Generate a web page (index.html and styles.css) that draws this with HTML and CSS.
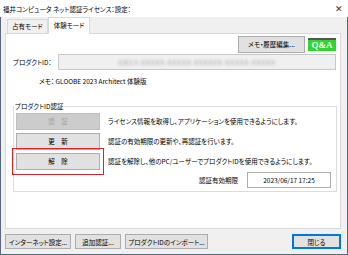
FILE: index.html
```html
<!DOCTYPE html>
<html lang="ja">
<head>
  <meta charset="UTF-8" />
  <title>ネット認証ライセンス 設定</title>
  <link rel="stylesheet" href="styles.css">
</head>
<body>
  <div class="window">
    <div class="titlebar">
      <span class="title">福井コンピュータ ネット認証ライセンス：設定：</span>
      <span class="close">✕</span>
    </div>

    <div class="body">
      <div class="tabs">
        <div class="tab">占有モード</div>
        <div class="tab active">体験モード</div>
      </div>

      <div class="panel">
        <div class="top-row">
          <button class="btn memo-btn">メモ・履歴編集...</button>
          <button class="qa">Q&amp;A</button>
        </div>

        <div class="id-row">
          <span class="id-label">プロダクトID：</span>
          <div class="id-field"><span class="blurred">GB23-XXXXX-XXXXX-XXXXXX-XXXXX-XXXXX</span></div>
        </div>

        <div class="memo">メモ：&nbsp;GLOOBE 2023 Architect 体験版</div>

        <fieldset class="group">
          <legend>プロダクトID認証</legend>
          <div class="action-row">
            <button class="btn action disabled">認　証</button>
            <span class="desc">ライセンス情報を取得し、アプリケーションを使用できるようにします。</span>
          </div>
          <div class="action-row">
            <button class="btn action">更　新</button>
            <span class="desc">認証の有効期限の更新や、再認証を行います。</span>
          </div>
          <div class="action-row">
            <div class="highlight">
              <button class="btn action">解　除</button>
            </div>
            <span class="desc">認証を解除し、他のPC/ユーザーでプロダクトIDを使用できるようにします。</span>
          </div>
          <div class="expire-row">
            <span class="expire-label">認証有効期限</span>
            <div class="date-field">2023/06/17 17:25</div>
          </div>
        </fieldset>
      </div>

      <div class="footer">
        <button class="btn foot net-btn">インターネット設定...</button>
        <button class="btn foot add-btn">追加認証...</button>
        <button class="btn foot import-btn">プロダクトIDのインポート...</button>
        <button class="btn foot close-btn">閉じる</button>
      </div>
    </div>
  </div>
</body>
</html>
```

FILE: styles.css
```css
body {
  margin: 0;
  font-family: "Noto Sans CJK JP", "Noto Sans", sans-serif;
  font-size: 6.5px;
  font-feature-settings: "palt";
  color: #000;
  overflow: hidden;
}

.window {
  width: 348px;
  height: 255px;
  display: flex;
  flex-direction: column;
  background: #f0f0f0;
  box-sizing: border-box;
  overflow: hidden;
}

.titlebar {
  height: 17px;
  flex: none;
  background: #fff;
  display: flex;
  align-items: center;
  justify-content: space-between;
  padding: 0 5px 0 3px;
  font-size: 6.5px;
}
.close {
  font-size: 9px;
  color: #333;
}

.body {
  flex: 1;
  border: 1px solid #56687a;
  border-top: none;
  display: flex;
  flex-direction: column;
  padding: 0 6px 0 4px;
}

.tabs {
  display: flex;
  align-items: flex-end;
  padding-left: 2px;
  height: 16px;
  flex: none;
}
.tab {
  height: 13px;
  line-height: 13px;
  padding: 0 4px;
  border: 1px solid #d9d9d9;
  border-bottom: none;
  background: #f0f0f0;
}
.tab.active {
  height: 16px;
  line-height: 15px;
  padding: 0 5px;
  background: #fff;
  margin-bottom: -1px;
  position: relative;
  z-index: 1;
}

.panel {
  height: 196px;
  flex: none;
  background: #fff;
  border: 1px solid #d9d9d9;
  box-sizing: border-box;
  display: flex;
  flex-direction: column;
  padding: 1px 4px 0 7px;
}

.btn {
  font: inherit;
  font-feature-settings: "palt";
  background: #e1e1e1;
  border: 1px solid #adadad;
  padding: 0;
  color: #000;
  white-space: nowrap;
}

.top-row {
  display: flex;
  justify-content: flex-end;
  align-items: center;
  gap: 3px;
  height: 18px;
}
.memo-btn {
  width: 67px;
  height: 17px;
}
.qa {
  width: 28px;
  height: 13px;
  padding: 0;
  background: #2fd62f;
  border: none;
  border-top: 2px solid #555;
  color: #fff;
  font-family: "Liberation Serif", serif;
  font-size: 9px;
  font-weight: bold;
  line-height: 10px;
}

.id-row {
  display: flex;
  align-items: center;
  margin-top: 1px;
}
.id-label {
  width: 45px;
  white-space: nowrap;
}
.id-field {
  flex: 1;
  height: 16px;
  background: #f0f0f0;
  border: 1px solid #c8c8c8;
  box-sizing: border-box;
  display: flex;
  align-items: center;
  justify-content: center;
  overflow: hidden;
}
.blurred {
  color: #9a9a9a;
  filter: blur(1.4px);
  letter-spacing: 1px;
  white-space: nowrap;
}

.memo {
  margin: 5px 0 0 26px;
  height: 12px;
  line-height: 12px;
}

.group {
  margin: 15px 0 0 0;
  padding: 1px 3px 3px 2px;
  border: 1px solid #dcdcdc;
  width: 324px;
  box-sizing: border-box;
}
.group legend {
  padding: 0 1px;
  margin-left: -2px;
  line-height: 8px;
}

.action-row {
  display: flex;
  align-items: center;
  height: 20px;
}
.action {
  width: 84px;
  height: 17px;
}
.action.disabled {
  background: #cccccc;
  border-color: #bfbfbf;
  color: #a0a0a0;
}
.highlight {
  border: 1px solid #d9232a;
  padding: 4px 3px;
  margin: -5px 0 -5px -4px;
}
.desc {
  margin-left: 8px;
  white-space: nowrap;
}
.highlight + .desc {
  margin-left: 4px;
}

.expire-row {
  display: flex;
  align-items: center;
  height: 17px;
  padding-left: 183px;
}
.expire-label {
  width: 48px;
  flex: none;
}
.date-field {
  flex: 0 0 84px;
  height: 16px;
  box-sizing: border-box;
  border: 1px solid #adadad;
  background: #fff;
  text-align: center;
  line-height: 14px;
}

.footer {
  display: flex;
  gap: 4px;
  margin-top: 5px;
}
.foot {
  height: 15px;
}
.net-btn {
  width: 66px;
}
.add-btn {
  width: 46px;
}
.import-btn {
  width: 83px;
}
.close-btn {
  margin-left: auto;
  width: 49px;
  border: 1px solid #0078d7;
  box-shadow: inset 0 0 0 1px #0078d7;
}
```
